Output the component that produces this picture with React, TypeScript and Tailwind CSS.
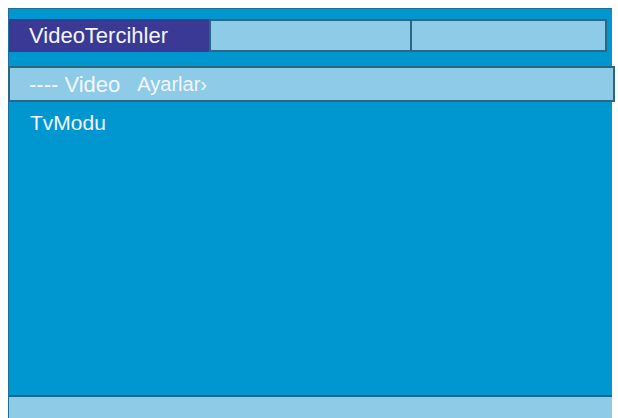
import React from "react";

export default function App() {
  return (
    <div className="w-[618px] h-[418px] bg-white overflow-hidden font-['Liberation_Sans',Arial,sans-serif]">
      <div className="ml-[8px] pt-[8px] w-[604px] h-[418px]">
        <div className="h-[410px] flex flex-col bg-[#0097d1] border-l border-t border-[#1d6f97]">
          <div className="pt-[10px] flex h-[43px]">
            <div className="w-[200px] h-[33px] bg-[#3a3a95] text-[#f4f6ff] text-[22px] leading-[33px] pl-[20px] whitespace-nowrap">
              VideoTercihler
            </div>
            <div className="w-[201px] h-[33px] bg-[#8dcbe6] border-[2px] border-r-0 border-[#2a6685]" />
            <div className="w-[197px] h-[33px] bg-[#8dcbe6] border-[2px] border-[#2a6685]" />
          </div>
          <div className="mt-[14px] -ml-[1px] w-[607px] h-[36px] bg-[#8dcbe6] border-[2px] border-[#2c6580] flex items-center pl-[19px] text-[#f4f6ff] whitespace-nowrap">
            <span className="text-[22px]">---- Video</span>
            <span className="text-[20px] ml-[17px]">Ayarlar›</span>
          </div>
          <div className="mt-[9px] pl-[21px] text-[#f4f6ff] text-[21px] leading-[24px]">TvModu</div>
          <div className="flex-1" />
          <div className="h-[23px] bg-[#8dcbe6] border-t-[2px] border-[#1f6688]" />
        </div>
      </div>
    </div>
  );
}
